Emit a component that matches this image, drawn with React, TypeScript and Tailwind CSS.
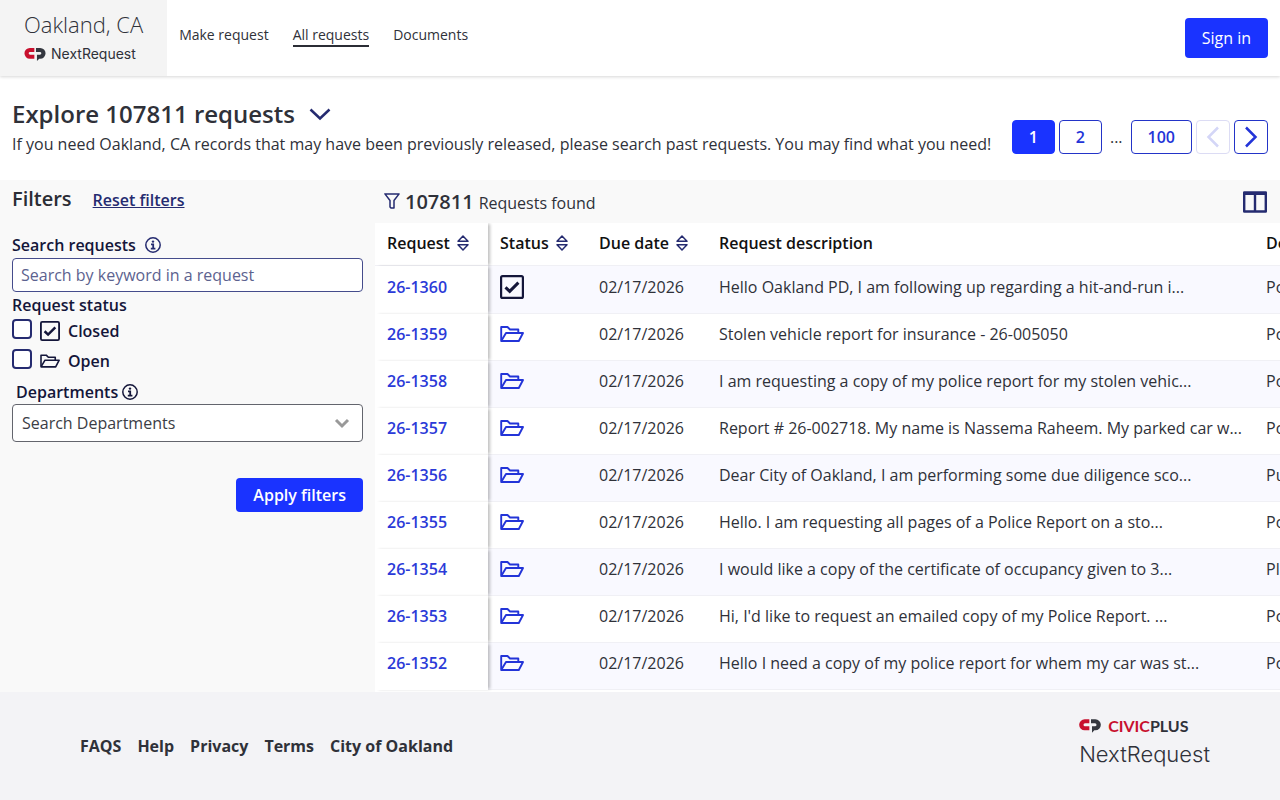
import React, { useState } from 'react';

interface RequestRow {
  id: string;
  closed?: boolean;
  due: string;
  description: string;
  department: string;
}

const navLinks = ['Make request', 'All requests', 'Documents'];
const footerLinks = ['FAQS', 'Help', 'Privacy', 'Terms', 'City of Oakland'];

const requests: RequestRow[] = [
  {
    id: '26-1360',
    closed: true,
    due: '02/17/2026',
    description: 'Hello Oakland PD, I am following up regarding a hit-and-run i...',
    department: 'Police Department',
  },
  {
    id: '26-1359',
    due: '02/17/2026',
    description: 'Stolen vehicle report for insurance - 26-005050',
    department: 'Police Department',
  },
  {
    id: '26-1358',
    due: '02/17/2026',
    description: 'I am requesting a copy of my police report for my stolen vehic...',
    department: 'Police Department',
  },
  {
    id: '26-1357',
    due: '02/17/2026',
    description: 'Report # 26-002718. My name is Nassema Raheem. My parked car w...',
    department: 'Police Department',
  },
  {
    id: '26-1356',
    due: '02/17/2026',
    description: 'Dear City of Oakland, I am performing some due diligence sco...',
    department: 'Public Works',
  },
  {
    id: '26-1355',
    due: '02/17/2026',
    description: 'Hello. I am requesting all pages of a Police Report on a sto...',
    department: 'Police Department',
  },
  {
    id: '26-1354',
    due: '02/17/2026',
    description: 'I would like a copy of the certificate of occupancy given to 3...',
    department: 'Planning & Building',
  },
  {
    id: '26-1353',
    due: '02/17/2026',
    description: "Hi, I'd like to request an emailed copy of my Police Report. ...",
    department: 'Police Department',
  },
  {
    id: '26-1352',
    due: '02/17/2026',
    description: 'Hello I need a copy of my police report for whem my car was st...',
    department: 'Police Department',
  },
];

function LogoMark({ className }: { className: string }) {
  return (
    <svg viewBox="0 0 66 40" className={className} aria-hidden="true">
      <path fill="#c8102e" d="M31 0v12H18a4.500 4.500 0 0 0 0 9h13v12H17A16.500 16.500 0 0 1 17 0z" />
      <path fill="#34373f" d="M36 0h13a16.500 16.500 0 0 1 0 33h-3l-7 7V21h9a4.500 4.500 0 0 0 0-9H36z" />
    </svg>
  );
}

function InfoIcon({ className }: { className: string }) {
  return (
    <svg viewBox="0 0 16 16" className={className} fill="none" aria-hidden="true">
      <circle cx="8" cy="8" r="7.200" stroke="currentColor" strokeWidth="1.500" />
      <circle cx="8" cy="4.600" r="1.200" fill="currentColor" />
      <path d="M6 7.300H8.200V11.600M5.800 11.600H10.400" stroke="currentColor" strokeWidth="1.800" />
    </svg>
  );
}

function ClosedIcon({ className }: { className: string }) {
  return (
    <svg viewBox="0 0 24 24" className={className} fill="none" stroke="currentColor" aria-hidden="true">
      <rect x="1.100" y="1.100" width="21.800" height="21.800" rx="1.500" strokeWidth="2.200" />
      <path d="M5.500 12.300l4.200 4L18.400 7.600" strokeWidth="3" />
    </svg>
  );
}

function FolderIcon({ className }: { className: string }) {
  return (
    <svg
      viewBox="0 0 24 16"
      className={className}
      fill="none"
      stroke="currentColor"
      strokeWidth="1.900"
      strokeLinejoin="round"
      aria-hidden="true"
    >
      <path d="M1.200 14.500V1H7.500L10 3.500H18.300V7" />
      <path d="M1.200 15L6 7H23L18.800 15z" />
    </svg>
  );
}

function SortIcon() {
  return (
    <svg
      viewBox="0 0 12 16"
      className="h-4 w-3 text-[#252b70]"
      fill="none"
      stroke="currentColor"
      strokeWidth="1.500"
      strokeLinejoin="round"
      aria-hidden="true"
    >
      <path d="M1 6.200L6 1l5 5.200z" />
      <path d="M1 9.800L6 15l5-5.200z" />
    </svg>
  );
}

function Chevron({ d, className }: { d: string; className: string }) {
  return (
    <svg viewBox="0 0 24 24" className={className} fill="none" stroke="currentColor" aria-hidden="true">
      <path d={d} />
    </svg>
  );
}

function SortHeader({ label }: { label: string }) {
  return (
    <button type="button" className="flex items-center gap-[7px] font-semibold">
      {label}
      <SortIcon />
    </button>
  );
}

function Header() {
  return (
    <header className="z-10 flex h-[76px] shrink-0 bg-white shadow-[0_1px_3px_rgba(0,0,0,0.16)]">
      <a href="#home" className="flex flex-col bg-[#f4f4f4] px-6 pt-2">
        <span className="text-[22px] font-light leading-8">Oakland, CA</span>
        <span className="mt-1 flex items-center gap-[5px] font-['Inter',sans-serif] text-sm">
          <LogoMark className="h-[13px] w-[22px]" />
          NextRequest
        </span>
      </a>
      <nav className="flex flex-1 items-start gap-6 px-3 pt-6 text-sm">
        {navLinks.map((link) => (
          <a
            key={link}
            href="#nav"
            className={
              link === 'All requests'
                ? 'border-b-2 border-[#2b2d35] leading-[21px]'
                : 'leading-[21px]'
            }
          >
            {link}
          </a>
        ))}
      </nav>
      <button
        type="button"
        className="mr-3 mt-[18px] h-10 rounded bg-[#1a33ff] px-[17px] font-medium text-white"
      >
        Sign in
      </button>
    </header>
  );
}

function Pagination() {
  const pageClass = 'h-[34px] rounded border border-[#2334c8] bg-white px-4 font-semibold text-[#2334d8]';

  return (
    <nav aria-label="Pagination" className="mt-[18px] flex items-center gap-1">
      <button
        type="button"
        className="h-[34px] rounded border border-[#1a33ff] bg-[#1a33ff] px-4 font-semibold text-white"
      >
        1
      </button>
      <button type="button" className={pageClass}>
        2
      </button>
      <span className="px-1">...</span>
      <button type="button" className={pageClass}>
        100
      </button>
      <button
        type="button"
        disabled
        aria-label="Previous page"
        className="flex h-[34px] w-[34px] items-center justify-center rounded border border-[#dcdcf4] text-[#d4d6f7]"
      >
        <Chevron d="M17 2.500L7.500 12l9.500 9.500" className="h-6 w-6 stroke-[2.5]" />
      </button>
      <button
        type="button"
        aria-label="Next page"
        className="flex h-[34px] w-[34px] items-center justify-center rounded border border-[#2334c8] text-[#2334d8]"
      >
        <Chevron d="M7 2.500l9.500 9.500L7 21.500" className="h-6 w-6 stroke-[2.5]" />
      </button>
    </nav>
  );
}

function Filters() {
  const [keyword, setKeyword] = useState('');
  const checkbox = 'size-5 appearance-none rounded border-2 border-[#252b70] bg-white checked:bg-[#252b70]';

  return (
    <aside className="w-[375px] shrink-0 px-3 text-[#14163a]">
      <div className="flex h-[53px] items-baseline gap-[21px] pt-1">
        <h2 className="text-xl font-semibold leading-[30px] text-[#2b2d35]">Filters</h2>
        <button type="button" className="font-semibold text-[#252b70] underline">
          Reset filters
        </button>
      </div>
      <div className="mb-px flex h-6 items-center gap-[9px] font-semibold">
        <label htmlFor="keyword">Search requests</label>
        <InfoIcon className="size-4 text-[#252b70]" />
      </div>
      <input
        id="keyword"
        type="text"
        value={keyword}
        onChange={(e) => setKeyword(e.target.value)}
        placeholder="Search by keyword in a request"
        className="block h-[34px] w-full rounded border border-[#454c8c] bg-white px-2 placeholder:text-[#5c628f]"
      />
      <fieldset className="font-semibold">
        <legend className="pb-0.5 pt-px">Request status</legend>
        <label className="flex h-[30px] items-start gap-2">
          <input type="checkbox" className={checkbox} />
          <ClosedIcon className="mt-0.5 size-5" />
          Closed
        </label>
        <label className="flex h-[30px] items-start gap-2">
          <input type="checkbox" className={checkbox} />
          <FolderIcon className="mt-1 h-4 w-5" />
          Open
        </label>
      </fieldset>
      <div className="flex h-[25px] items-center gap-1 px-1 font-semibold">
        <label htmlFor="departments">Departments</label>
        <InfoIcon className="size-4" />
      </div>
      <div className="relative">
        <select
          id="departments"
          className="block h-[38px] w-full appearance-none rounded border border-[#63656d] bg-white px-[9px] text-[#3b3d45]"
        >
          <option>Search Departments</option>
        </select>
        <Chevron
          d="M4 8l8 8 8-8"
          className="pointer-events-none absolute right-3 top-[10px] size-[18px] stroke-4 text-[#999999]"
        />
      </div>
      <div className="mt-9 flex justify-end">
        <button type="button" className="h-[34px] rounded bg-[#1a33ff] px-[17px] font-semibold text-white">
          Apply filters
        </button>
      </div>
    </aside>
  );
}

function RequestTable() {
  return (
    <div className="flex-1 overflow-hidden bg-white">
      <table className="w-[1140px] table-fixed border-separate border-spacing-0 whitespace-nowrap text-left">
        <colgroup>
          <col className="w-[113px]" />
          <col className="w-[99px]" />
          <col className="w-[120px]" />
          <col className="w-[547px]" />
          <col />
        </colgroup>
        <thead className="text-[#111111]">
          <tr className="h-[43px]">
            <th className="relative z-10 border-b border-[#f0f0f5] bg-white px-3 pb-0.5 shadow-[3px_0_3px_-1px_rgba(0,0,0,0.25)]">
              <SortHeader label="Request" />
            </th>
            <th className="border-b border-[#f0f0f5] px-3 pb-0.5">
              <SortHeader label="Status" />
            </th>
            <th className="border-b border-[#f0f0f5] px-3 pb-0.5">
              <SortHeader label="Due date" />
            </th>
            <th className="border-b border-[#f0f0f5] px-3 pb-0.5 font-semibold">Request description</th>
            <th className="border-b border-[#f0f0f5] px-3 pb-0.5 font-semibold">Departments</th>
          </tr>
        </thead>
        <tbody>
          {requests.map((row) => (
            <tr key={row.id} className="h-[47px] first:h-12 odd:bg-[#f9f9ff]">
              <td className="relative z-10 border-b border-white bg-white px-3 pb-1.5 font-semibold text-[#2b3ad8] shadow-[3px_0_3px_-1px_rgba(0,0,0,0.25)]">
                <a href="#request">{row.id}</a>
              </td>
              <td className="border-b border-[#f0f0f5] px-3 pb-1.5">
                {row.closed ? (
                  <ClosedIcon className="size-6 text-[#14163a]" />
                ) : (
                  <FolderIcon className="h-4 w-6 text-[#2334d8]" />
                )}
              </td>
              <td className="border-b border-[#f0f0f5] px-3 pb-1.5">{row.due}</td>
              <td className="border-b border-[#f0f0f5] px-3 pb-1.5">{row.description}</td>
              <td className="border-b border-[#f0f0f5] px-3 pb-1.5">{row.department}</td>
            </tr>
          ))}
        </tbody>
      </table>
    </div>
  );
}

function Footer() {
  return (
    <footer className="flex h-[108px] shrink-0 items-center justify-between bg-[#f3f3f6] pl-20 pr-[70px]">
      <nav aria-label="Footer" className="flex gap-4 font-bold">
        {footerLinks.map((link) => (
          <a key={link} href="#footer">
            {link}
          </a>
        ))}
      </nav>
      <a href="#civicplus" className="pb-2">
        <span className="flex items-center gap-[7px] font-['Lato',sans-serif] text-base font-bold leading-6">
          <LogoMark className="h-[14px] w-[22px]" />
          <span>
            <span className="text-[#c8102e]">CIVIC</span>PLUS
          </span>
        </span>
        <span className="block font-['Inter',sans-serif] text-[22px] font-light leading-8">NextRequest</span>
      </a>
    </footer>
  );
}

export default function App() {
  return (
    <div className="flex h-screen flex-col overflow-hidden bg-white font-['Open_Sans',sans-serif] text-base text-[#2f3139]">
      <Header />
      <section className="flex h-[104px] shrink-0 items-center justify-between px-3">
        <div className="pb-1">
          <h1 className="flex items-center gap-[13px] text-2xl font-semibold leading-9">
            Explore 107811 requests
            <button type="button" aria-label="Toggle details" className="text-[#252b70]">
              <Chevron d="M2.500 7.500l9.500 9 9.500-9" className="size-6 stroke-[2.5]" />
            </button>
          </h1>
          <p>
            If you need Oakland, CA records that may have been previously released, please search past
            requests. You may find what you need!
          </p>
        </div>
        <Pagination />
      </section>
      <main className="flex min-h-0 flex-1 bg-[#f9f9f9]">
        <Filters />
        <div className="flex min-w-0 flex-1 flex-col">
          <div className="flex h-[43px] items-center justify-between pl-[9px] pr-[13px]">
            <p className="flex items-baseline gap-[5px]">
              <svg viewBox="0 0 16 16" className="size-4 text-[#252b70]" fill="none" aria-hidden="true">
                <path
                  d="M.9.900h14.200L10 7.500v7.600H7L6 14V7.500z"
                  stroke="currentColor"
                  strokeWidth="1.500"
                  strokeLinejoin="round"
                />
              </svg>
              <span className="text-xl font-semibold">107811</span>
              Requests found
            </p>
            <button type="button" aria-label="Choose columns" className="text-[#252b70]">
              <svg viewBox="0 0 24 22" className="h-[22px] w-6" fill="none" aria-hidden="true">
                <path
                  d="M1.200 1.500h21.600v19H1.200zM12 2v18"
                  stroke="currentColor"
                  strokeWidth="2.400"
                  strokeLinejoin="round"
                />
                <path d="M1 1h22v3H1z" fill="currentColor" />
              </svg>
            </button>
          </div>
          <RequestTable />
        </div>
      </main>
      <Footer />
    </div>
  );
}
